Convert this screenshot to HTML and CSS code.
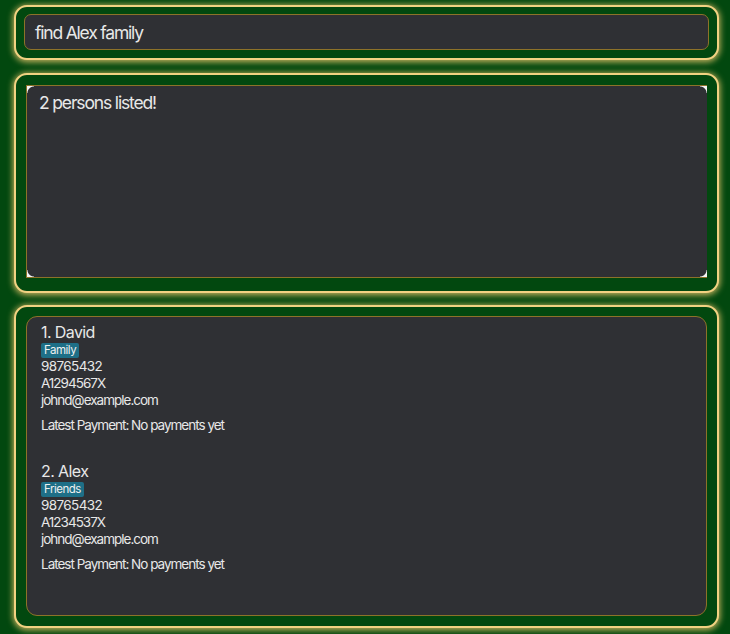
FILE: index.html
```html
<!DOCTYPE html>
<html>
<head>
<meta charset="utf-8">
<link rel="stylesheet" href="styles.css">
</head>
<body>
<div class="app">
  <div class="panel panel-cmd">
    <div class="cmd-box">find Alex family</div>
  </div>
  <div class="panel panel-result">
    <div class="result-box">
      <span class="corner tl"></span><span class="corner tr"></span><span class="corner bl"></span><span class="corner br"></span>
      <div class="result-text">2 persons listed!</div>
    </div>
  </div>
  <div class="panel panel-list">
    <div class="list-box">
      <div class="card">
        <div class="name">1. David</div>
        <div class="tags"><span class="tag">Family</span></div>
        <div class="field num">98765432</div>
        <div class="field">A1294567X</div>
        <div class="field">johnd@example.com</div>
        <div class="payment">Latest Payment: No payments yet</div>
      </div>
      <div class="card">
        <div class="name">2. Alex</div>
        <div class="tags"><span class="tag">Friends</span></div>
        <div class="field num">98765432</div>
        <div class="field">A1234537X</div>
        <div class="field">johnd@example.com</div>
        <div class="payment">Latest Payment: No payments yet</div>
      </div>
    </div>
  </div>
</div>
</body>
</html>
```
FILE: styles.css
```css
html, body {
  margin: 0;
  padding: 0;
  background: #02480f;
  width: 730px;
  height: 634px;
  overflow: hidden;
  font-family: Inter, "Noto Sans", sans-serif;
  color: #e8e8e8;
}
.app {
  display: flex;
  flex-direction: column;
  padding: 5px 11px 0 14px;
}
.panel {
  box-sizing: border-box;
  width: 705px;
  border: 2px solid #f1d282;
  border-radius: 13px;
  box-shadow: 0 1px 6px 1px rgba(236, 200, 110, 0.85);
  background: #02480f;
}
.panel-cmd {
  height: 55px;
  padding: 7px 8px 8px 8px;
}
.panel-result {
  height: 220px;
  margin-top: 13px;
  padding: 10px 10px 13px 10px;
}
.panel-list {
  height: 323px;
  margin-top: 12px;
  padding: 9px 10px 10px 10px;
}
.cmd-box {
  box-sizing: border-box;
  height: 36px;
  background: #2f3034;
  border: 1px solid #8d7229;
  border-radius: 7px;
  padding: 0 10px;
  display: flex;
  align-items: center;
  font-size: 17.5px;
  letter-spacing: -1.2px;
}
.result-box {
  position: relative;
  box-sizing: border-box;
  height: 100%;
  background: #2f3034;
  border: 1px solid #8d7229;
  border-right: none;
  padding: 6px 12px;
  font-size: 17.5px;
  letter-spacing: -1.15px;
}
.corner {
  position: absolute;
  width: 7px;
  height: 7px;
}
.corner.tl { top: 0; left: 0; background: radial-gradient(circle at 100% 100%, #2f3034 6px, #f4f4f4 7px); }
.corner.tr { top: 0; right: 0; background: radial-gradient(circle at 0 100%, #2f3034 6px, #f4f4f4 7px); }
.corner.bl { bottom: 0; left: 0; background: radial-gradient(circle at 100% 0, #2f3034 6px, #f4f4f4 7px); }
.corner.br { bottom: 0; right: 0; background: radial-gradient(circle at 0 0, #2f3034 6px, #f4f4f4 7px); }
.list-box {
  box-sizing: border-box;
  height: 100%;
  background: #2f3034;
  border: 1px solid #8d7229;
  border-radius: 11px;
  padding: 5px 14px;
  display: flex;
  flex-direction: column;
}
.card {
  height: 139px;
  display: flex;
  flex-direction: column;
}
.name {
  font-size: 16px;
  letter-spacing: -0.6px;
  line-height: 20px;
}
.tags {
  display: flex;
  margin: 1px 0 0 0;
}
.tag {
  background: #1e6f87;
  color: #f0f0f0;
  font-size: 11.5px;
  letter-spacing: -0.5px;
  line-height: 15px;
  padding: 0 3px;
  border-radius: 2px;
}
.field {
  font-size: 13.5px;
  letter-spacing: -1px;
  line-height: 17px;
}
.field.num {
  letter-spacing: -0.6px;
}
.payment {
  font-size: 13.5px;
  letter-spacing: -1px;
  line-height: 17px;
  margin-top: 8px;
}
```
